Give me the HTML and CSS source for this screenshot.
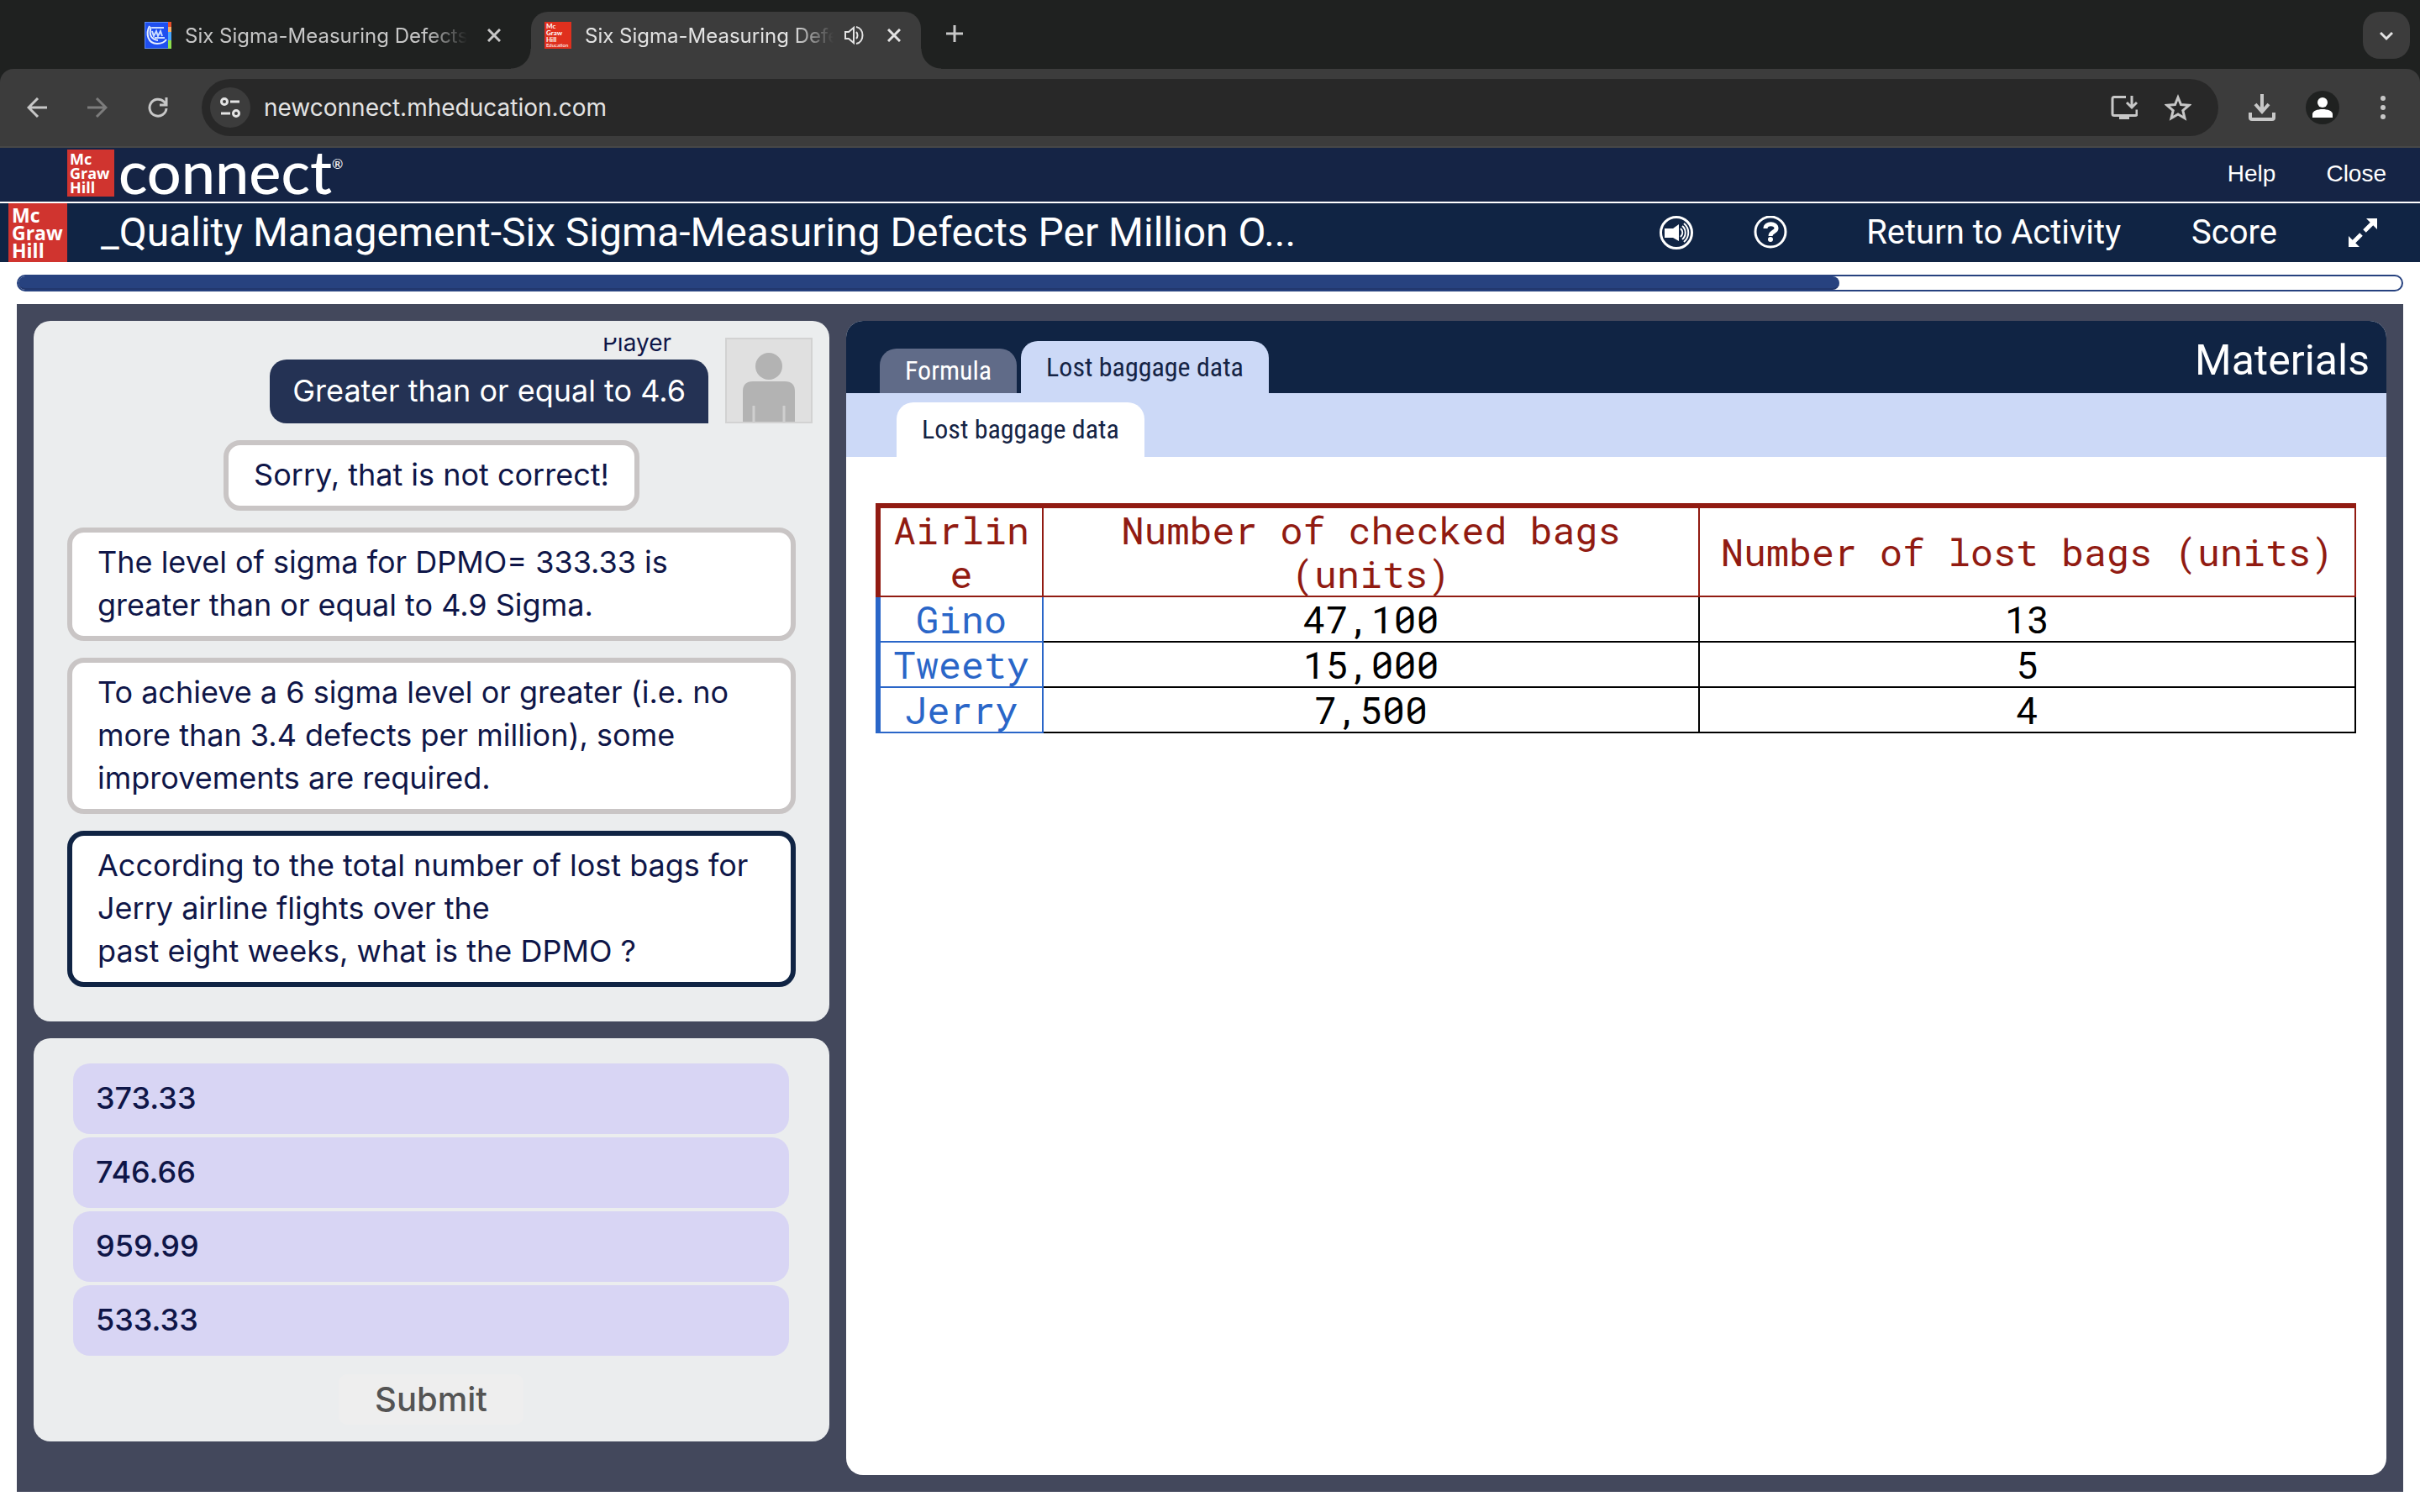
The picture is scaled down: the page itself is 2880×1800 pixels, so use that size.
FILE: index.html
```html
<!DOCTYPE html>
<html lang="en">
  <head>
    <meta charset="UTF-8" />
    <meta name="viewport" content="width=device-width, initial-scale=1.0" />
    <title>Six Sigma-Measuring Defects Per Million Opportunities</title>
    <link rel="stylesheet" href="styles.css">
  </head>
  <body>
    <div class="browser">
      <!-- Browser tabs -->
      <div class="tab-strip">
        <div class="browser-tab">
          <svg class="favicon" viewBox="0 0 32 32">
            <rect width="32" height="32" fill="#5b8cf5" />
            <rect x="1" y="1" width="28" height="30" fill="#1f4ff0" />
            <path d="M28 0h4v6h-4z" fill="#e8502c" />
            <path d="M28 6h4v6h-4z" fill="#f5b06a" />
            <path d="M28 12h4v10h-4z" fill="#4aa8ff" />
            <path d="M28 22h4v10h-4z" fill="#8de04e" />
            <path d="M6 5c-5 9-2 21 9 21 5 0 9-2 11-5M8 6c-3 8-1 15 8 16" fill="none" stroke="#e6efff" stroke-width="2" />
            <path d="M9 7h14M9 11l2 6 3-6 2 6 3-6 2 6M12 19h12" fill="none" stroke="#c9dcff" stroke-width="2" />
          </svg>
          <span class="tab-title">Six Sigma-Measuring Defects</span>
          <button class="icon-button" aria-label="Close tab">
            <svg class="close-icon" viewBox="0 0 16 16"><path d="M1 1l14 14M15 1L1 15" /></svg>
          </button>
        </div>
        <div class="browser-tab active">
          <div class="favicon mh-logo">Mc<br>Graw<br>Hill<br><small>Education</small></div>
          <span class="tab-title">Six Sigma-Measuring Defe</span>
          <svg class="volume-icon" viewBox="0 0 24 24">
            <path d="M2 8h4l6-5v18l-6-5H2z" />
            <path d="M15 8c2 2 2 6 0 8M15 2c10 2 10 18 0 20" />
          </svg>
          <button class="icon-button" aria-label="Close tab">
            <svg class="close-icon" viewBox="0 0 16 16"><path d="M1 1l14 14M15 1L1 15" /></svg>
          </button>
        </div>
        <button class="icon-button new-tab" aria-label="New tab">
          <svg viewBox="0 0 20 20"><path d="M10 0v20M0 10h20" /></svg>
        </button>
        <button class="icon-button tab-search" aria-label="Search tabs">
          <svg viewBox="0 0 16 16"><path d="M1 5l7 7 7-7" /></svg>
        </button>
      </div>

      <!-- Browser toolbar -->
      <div class="toolbar">
        <button class="icon-button" aria-label="Back">
          <svg viewBox="0 0 24 24"><path d="M24 12H2M13 1L2 12l11 11" /></svg>
        </button>
        <button class="icon-button forward" aria-label="Forward">
          <svg viewBox="0 0 24 24"><path d="M0 12h22M11 1l11 11-11 11" /></svg>
        </button>
        <button class="icon-button" aria-label="Reload">
          <svg viewBox="0 0 24 24"><path d="M22 13a10 10 0 1 1-3-8l3 3M22 0v9h-8" /></svg>
        </button>
        <div class="omnibox">
          <button class="icon-button site-info" aria-label="View site information">
            <svg viewBox="0 0 24 24">
              <circle cx="5" cy="5" r="3.5" /><path d="M12 5h11" />
              <circle cx="19" cy="19" r="3.5" /><path d="M1 19h11" />
            </svg>
          </button>
          <input type="text" class="url" aria-label="Address" value="newconnect.mheducation.com">
          <button class="icon-button" aria-label="Install app">
            <svg class="tool-icon" viewBox="0 0 32 32">
              <path d="M18 3.5H4q-2 0-2 2v18q0 2 2 2h25q2 0 2-2v-5" />
              <path d="M10 26h12v4H10z" fill="currentColor" stroke="none" />
              <path d="M25 2v14M19 10l6 6 6-6" />
            </svg>
          </button>
          <button class="icon-button" aria-label="Bookmark this tab">
            <svg class="tool-icon" viewBox="0 0 32 32">
              <path d="M16 4l3.5 8.5 9.5.8-7.2 6.2 2.2 9.2L16 24l-8 4.7 2.2-9.2L3 13.3l9.5-.8z" />
            </svg>
          </button>
        </div>
        <button class="icon-button downloads" aria-label="Downloads">
          <svg class="tool-icon" viewBox="0 0 32 32"><path d="M16 0v21M8 12l8 9 8-9M2 22v6q0 2 2 2h24q2 0 2-2v-6" /></svg>
        </button>
        <button class="icon-button profile" aria-label="Profile">
          <svg viewBox="0 0 40 40">
            <circle cx="20" cy="20" r="20" fill="#1f2120" />
            <circle cx="20" cy="14" r="6" fill="#fff" />
            <path d="M8 32v-4c0-8 24-8 24 0v4z" fill="#fff" />
          </svg>
        </button>
        <button class="icon-button menu" aria-label="Menu">
          <svg viewBox="0 0 8 28"><circle cx="4" cy="3" r="3" /><circle cx="4" cy="14" r="3" /><circle cx="4" cy="25" r="3" /></svg>
        </button>
      </div>
    </div>

    <header class="connect-bar">
      <div class="mh-logo small-logo">Mc<br>Graw<br>Hill</div>
      <span class="connect-name">connect<sup>®</sup></span>
      <nav>
        <a href="#">Help</a>
        <a href="#">Close</a>
      </nav>
    </header>

    <header class="activity-bar">
      <div class="mh-logo large-logo">Mc<br>Graw<br>Hill</div>
      <h1>_Quality Management-Six Sigma-Measuring Defects Per Million O...</h1>
      <button class="icon-button sound" aria-label="Sound">
        <svg viewBox="0 0 40 40">
          <circle cx="20" cy="20" r="18.5" />
          <path d="M6 15h10l7-5v20l-7-4H6z" fill="#fff" stroke="none" />
          <path d="M25 15c3 3 3 7 0 10M27 12c5 4 5 12 0 16M29 9c7 6 7 16 0 22" stroke-width="2" />
        </svg>
      </button>
      <button class="icon-button help" aria-label="Help">
        <svg viewBox="0 0 40 40">
          <circle cx="20" cy="19" r="18" />
          <path d="M14 15c0-7 13-7 13 0 0 4-7 4-7 9" stroke-width="5" />
          <circle cx="20" cy="28" r="3" fill="#fff" stroke="none" />
        </svg>
      </button>
      <a class="return" href="#">Return to Activity</a>
      <a class="score" href="#">Score</a>
      <button class="icon-button expand" aria-label="Full screen">
        <svg viewBox="0 0 36 36">
          <path d="M20 16l9-9M7 29l9-9" stroke-width="5" />
          <path d="M22 1h13v13zM1 22v13h13z" fill="#fff" stroke="none" />
        </svg>
      </button>
    </header>

    <div class="progress"><div class="progress-fill" style="width: 76.4%"></div></div>

    <main class="stage">
      <div class="left-column">
        <section class="panel chat">
          <div class="chat-messages">
            <div class="player-row">
              <div class="player-text">
                <span class="player-name">Player</span>
                <p class="player-message">Greater than or equal to 4.6</p>
              </div>
              <svg class="avatar" viewBox="0 0 104 102">
                <rect width="104" height="102" fill="#e0e0e0" />
                <path d="M1 101V1h102v100z" fill="none" stroke="#d2d2d2" stroke-width="2" />
                <ellipse cx="52" cy="34" rx="16" ry="16" fill="#b3b3b3" />
                <path d="M21 100V64q0-12 12-12h38q12 0 12 12v36z" fill="#b3b3b3" />
                <path d="M34 81v20M70 81v20" stroke="#cfcfcf" stroke-width="3" />
              </svg>
            </div>
            <p class="message short">Sorry, that is not correct!</p>
            <p class="message">The level of sigma for DPMO= 333.33 is greater than or equal to 4.9 Sigma.</p>
            <p class="message">To achieve a 6 sigma level or greater (i.e. no more than 3.4 defects per million), some improvements are required.</p>
            <p class="message current">According to the total number of lost bags for Jerry airline flights over the<br>past eight weeks, what is the DPMO ?</p>
          </div>
        </section>

        <section class="panel answers">
          <button class="choice">373.33</button>
          <button class="choice">746.66</button>
          <button class="choice">959.99</button>
          <button class="choice">533.33</button>
          <button class="submit">Submit</button>
        </section>
      </div>

      <section class="materials">
        <div class="materials-header">
          <div class="tabs">
            <button class="tab">Formula</button>
            <button class="tab active">Lost baggage data</button>
          </div>
          <h2>Materials</h2>
        </div>
        <div class="sub-tabs">
          <button class="tab active">Lost baggage data</button>
        </div>
        <table>
          <thead>
            <tr>
              <th class="airline">Airline</th>
              <th>Number of checked bags (units)</th>
              <th>Number of lost bags (units)</th>
            </tr>
          </thead>
          <tbody>
            <tr><th>Gino</th><td>47,100</td><td>13</td></tr>
            <tr><th>Tweety</th><td>15,000</td><td>5</td></tr>
            <tr><th>Jerry</th><td>7,500</td><td>4</td></tr>
          </tbody>
        </table>
      </section>
    </main>
  </body>
</html>
```

FILE: styles.css
```css
* {
  margin: 0;
  padding: 0;
  box-sizing: border-box;
}

body {
  font-family: Inter, sans-serif;
  background: #ffffff;
  color: #0f1648;
  min-height: 100vh;
  display: flex;
  flex-direction: column;
}

button {
  border: none;
  background: none;
  font-family: inherit;
  cursor: pointer;
}

a {
  color: inherit;
  text-decoration: none;
}

svg {
  display: block;
  fill: none;
  stroke: currentColor;
  stroke-width: 3;
}

.icon-button {
  display: flex;
  align-items: center;
  justify-content: center;
  flex: none;
  color: #c7c7c7;
}

.icon-button svg {
  width: 24px;
  height: 24px;
}

/* Browser tabs */
.browser {
  background: #1f2120;
}

.tab-strip {
  display: flex;
  height: 82px;
  padding: 14px 12px 0 156px;
}

.browser-tab {
  display: flex;
  align-items: center;
  width: 464px;
  height: 68px;
  padding: 0 24px 12px 16px;
  color: #c7c7c7;
  font-size: 24px;
}

.browser-tab:first-child {
  width: 476px;
  padding-right: 36px;
}

.browser-tab.active {
  position: relative;
  background: #3c3c3c;
  border-radius: 20px 20px 0 0;
  color: #e3e3e3;
}

/* Curved feet of the selected tab */
.browser-tab.active::before,
.browser-tab.active::after {
  content: "";
  position: absolute;
  bottom: 0;
  width: 24px;
  height: 24px;
}

.browser-tab.active::before {
  left: -24px;
  background: radial-gradient(circle at 0 0, #1f2120 23px, #3c3c3c 24px);
}

.browser-tab.active::after {
  right: -24px;
  background: radial-gradient(circle at 100% 0, #1f2120 23px, #3c3c3c 24px);
}

.favicon {
  flex: none;
  width: 32px;
  height: 32px;
  margin-right: 16px;
}

.favicon rect,
.favicon path[fill^="#"] {
  stroke: none;
}

.tab-title {
  flex: 1;
  overflow: hidden;
  white-space: nowrap;
  margin-right: 24px;
  mask-image: linear-gradient(to left, transparent, #000 48px);
}

.browser-tab.active .tab-title {
  margin-right: 12px;
}

.browser-tab.active .icon-button {
  color: #e3e3e3;
}

.icon-button .close-icon {
  width: 16px;
  height: 16px;
}

.volume-icon {
  width: 24px;
  height: 24px;
  margin-right: 28px;
  stroke-width: 2;
}

.new-tab {
  width: 80px;
  padding-bottom: 16px;
}

.icon-button.new-tab svg {
  width: 20px;
  height: 20px;
}

.tab-search {
  width: 56px;
  height: 56px;
  margin-left: auto;
  border-radius: 20px;
  background: #3c3c3c;
  color: #e3e3e3;
}

.icon-button.tab-search svg {
  width: 16px;
  height: 16px;
}

/* Browser toolbar */
.toolbar {
  display: flex;
  align-items: center;
  height: 94px;
  padding: 0 40px 0 32px;
  background: #3c3c3c;
  border-bottom: 2px solid #474747;
  border-radius: 16px 16px 0 0;
}

.toolbar > .icon-button {
  margin-right: 48px;
}

.toolbar > .icon-button.forward {
  color: #7c7c7c;
}

.omnibox {
  flex: 1;
  display: flex;
  align-items: center;
  height: 68px;
  margin: 0 36px 0 -8px;
  padding: 0 32px 0 10px;
  border-radius: 34px;
  background: #282828;
}

.site-info {
  width: 48px;
  height: 48px;
  margin-right: 16px;
  border-radius: 50%;
  background: #3c3c3c;
  color: #e3e3e3;
}

.url {
  flex: 1;
  border: none;
  background: none;
  outline: none;
  color: #e3e3e3;
  font-family: inherit;
  font-size: 28px;
}

.omnibox .icon-button + .icon-button {
  margin-left: 32px;
}

.icon-button .tool-icon {
  width: 32px;
  height: 32px;
}

.toolbar > .icon-button.downloads {
  margin-right: 36px;
}

.downloads .tool-icon {
  stroke-width: 4;
}

.icon-button.profile svg {
  width: 40px;
  height: 40px;
  stroke: none;
}

.toolbar > .icon-button.menu {
  margin-right: 0;
}

.icon-button.menu svg {
  width: 8px;
  height: 28px;
  fill: currentColor;
  stroke: none;
}

/* McGraw Hill logos */
.mh-logo {
  flex: none;
  background: #d0342f;
  color: #ffffff;
  font-family: "Open Sans", sans-serif;
  font-weight: 700;
}

.favicon.mh-logo {
  padding: 1px 2px;
  background: #e0301e;
  font-family: Lato, sans-serif;
  font-size: 8px;
  line-height: 8px;
}

.favicon small {
  display: block;
  font-size: 6px;
  line-height: 6px;
  font-weight: 400;
}

.small-logo {
  width: 56px;
  height: 56px;
  padding: 3px;
  font-size: 18px;
  line-height: 17px;
}

.large-logo {
  width: 70px;
  height: 70px;
  padding: 4px;
  font-size: 23px;
  line-height: 21px;
}

/* Connect header */
.connect-bar {
  display: flex;
  align-items: center;
  height: 66px;
  padding: 0 40px 6px 80px;
  background: #152445;
  border-bottom: 2px solid #ffffff;
  color: #ffffff;
}

.small-logo {
  align-self: flex-end;
}

.connect-name {
  margin-left: 5px;
  padding-bottom: 4px;
  font-family: Lato, sans-serif;
  font-size: 72px;
  font-weight: 500;
  line-height: 56px;
}

.connect-name sup {
  font-size: 16px;
  vertical-align: 30px;
  line-height: 16px;
}

.connect-bar nav {
  display: flex;
  gap: 60px;
  margin-left: auto;
  padding-top: 4px;
  font-family: "Liberation Sans", Arial, sans-serif;
  font-size: 28px;
}

/* Activity header */
.activity-bar {
  display: flex;
  align-items: center;
  height: 70px;
  padding: 0 50px 0 10px;
  background: #102444;
  color: #ffffff;
  font-family: Roboto, sans-serif;
  font-size: 40px;
  line-height: 46px;
}

.activity-bar h1 {
  flex: 1;
  margin-left: 40px;
  font-size: 48px;
  font-weight: 400;
  white-space: nowrap;
}

.activity-bar .icon-button {
  color: #ffffff;
}

.activity-bar .icon-button svg {
  width: 40px;
  height: 40px;
}

.help {
  margin: 0 94px 0 72px;
}

.score {
  margin: 0 84px;
}

.activity-bar .expand svg {
  width: 36px;
  height: 36px;
}

.progress {
  height: 20px;
  margin: 15px 20px;
  border: 2px solid #27427f;
  border-radius: 10px;
}

.progress-fill {
  height: 16px;
  background: #27427f;
  border-bottom: 2px solid #22376d;
  border-radius: 8px;
}

/* Stage */
.stage {
  flex: 1;
  display: grid;
  grid-template-columns: 947px 1fr;
  gap: 20px;
  margin: 0 20px 24px;
  padding: 20px;
  background: #43485c;
}

.left-column {
  display: flex;
  flex-direction: column;
  gap: 20px;
}

.panel {
  background: #ebedee;
  border-radius: 20px;
}

.chat {
  padding: 20px 20px 41px;
}

.chat-messages {
  display: flex;
  flex-direction: column;
  gap: 20px;
  overflow: hidden;
}

.player-row {
  display: flex;
  justify-content: flex-end;
  gap: 20px;
  height: 102px;
}

.player-text {
  display: flex;
  flex-direction: column;
  align-items: flex-end;
  justify-content: flex-end;
}

.player-name {
  margin-right: 44px;
  font-size: 28px;
  line-height: 40px;
}

.player-message {
  padding: 12px 27px 13px;
  border-radius: 20px 20px 0 20px;
  background: #243254;
  color: #ffffff;
  font-size: 36px;
  line-height: 51px;
}

.avatar {
  width: 104px;
  height: 102px;
  stroke: none;
}

.message {
  margin: 0 20px;
  padding: 10px 30px 11px;
  border: 6px solid #c9c5c5;
  border-radius: 20px;
  background: #ffffff;
  font-size: 36px;
  line-height: 51px;
}

.message.short {
  align-self: center;
}

.message.current {
  border-color: #102444;
}

.answers {
  display: flex;
  flex-direction: column;
  gap: 4px;
  padding: 30px 48px 20px 47px;
}

.choice {
  height: 84px;
  padding: 0 27px 2px;
  border-radius: 20px;
  background: #d8d5f4;
  color: #0f1648;
  font-size: 36px;
  font-weight: 500;
  text-align: left;
}

.submit {
  align-self: center;
  width: 220px;
  margin-top: 18px;
  border-radius: 10px;
  background: #eeeeee;
  color: #545454;
  font-size: 40px;
  font-weight: 500;
  line-height: 60px;
}

/* Materials */
.materials {
  overflow: hidden;
  border-radius: 20px;
  background: #ffffff;
  font-family: Roboto, sans-serif;
}

.materials-header {
  display: flex;
  align-items: flex-end;
  justify-content: space-between;
  height: 86px;
  padding: 0 20px 0 40px;
  background: #102444;
  color: #ffffff;
}

.materials-header h2 {
  font-size: 50px;
  font-weight: 400;
  line-height: 78px;
}

.tabs {
  display: flex;
  align-items: flex-end;
  gap: 5px;
}

.tab {
  padding: 0 30px;
  border-radius: 20px 20px 0 0;
  background: #606b88;
  color: #ffffff;
  font-family: "Roboto Condensed", Roboto, sans-serif;
  font-size: 32px;
  line-height: 53px;
}

.tab.active {
  background: #ccd9f7;
  color: #152445;
  line-height: 62px;
}

.sub-tabs {
  padding: 11px 60px 0;
  background: #ccd9f7;
}

.sub-tabs .tab.active {
  display: block;
  background: #ffffff;
  line-height: 65px;
}

table {
  width: calc(100% - 71px);
  margin: 55px 36px 0 35px;
  border-collapse: collapse;
  table-layout: fixed;
  font-family: "Roboto Mono", "DejaVu Sans Mono", monospace;
  font-size: 45px;
  line-height: 52px;
  text-align: center;
  color: #000000;
}

th,
td {
  border: 2px solid #000000;
  font-weight: 400;
}

thead th {
  padding: 0 10px;
  border-color: #911b12;
  border-top-width: 6px;
  color: #911b12;
  overflow-wrap: anywhere;
}

thead .airline {
  width: 196px;
  border-left-width: 6px;
}

tbody th {
  border-color: #2a66c8;
  border-left-width: 6px;
  color: #2a66c8;
}
```
